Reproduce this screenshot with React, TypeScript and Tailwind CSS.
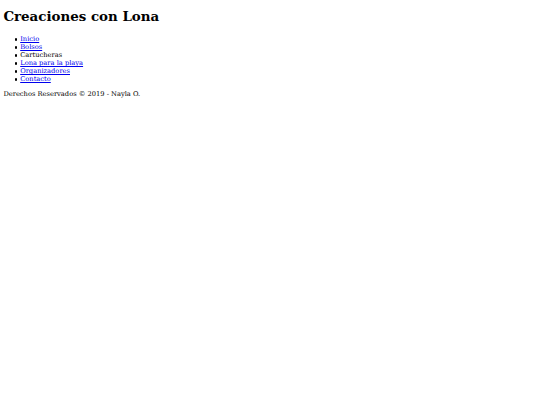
import React from "react";

const links = [
  { label: "Inicio", href: true },
  { label: "Bolsos", href: true },
  { label: "Cartucheras", href: false },
  { label: "Lona para la playa", href: true },
  { label: "Organizadores", href: true },
  { label: "Contacto", href: true },
];

export default function App() {
  return (
    <div className="min-h-[405px] bg-white px-[3.4px] py-[0.1px] text-[6.7px] leading-[1.2] text-black [font-family:'DejaVu_Serif',serif]">
      {/* Header */}
      <h1 className="mb-[10px] mt-[9.4px] text-[13.4px] font-bold leading-[1.164]">Creaciones con Lona</h1>

      {/* Nav */}
      <ul className="mb-[6.7px] list-none pl-[16.8px]">
        {links.map((item) => (
          <li key={item.label} className="relative">
            <span className="absolute left-[-5.5px] top-[3.2px] h-[2.4px] w-[2.4px] rounded-full bg-black" />
            {item.href ? (
              <a href="#" className="text-[#0000ee] underline">
                {item.label}
              </a>
            ) : (
              item.label
            )}
          </li>
        ))}
      </ul>

      {/* Footer */}
      <p className="my-[6.7px]">Derechos Reservados © 2019 - Nayla O.</p>
    </div>
  );
}
